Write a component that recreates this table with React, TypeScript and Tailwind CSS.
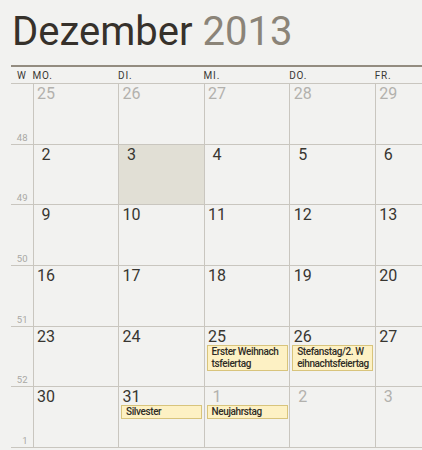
const weekdays = ['MO.', 'DI.', 'MI.', 'DO.', 'FR.'];

interface Day {
  n: number;
  other?: boolean;
  today?: boolean;
  events?: string[][];
}

interface Week {
  kw: number;
  days: Day[];
}

// nur Mo-Fr, Sa/So liegen ausserhalb des Bildes
const weeks: Week[] = [
  { kw: 48, days: [25, 26, 27, 28, 29].map((n) => ({ n, other: true })) },
  { kw: 49, days: [2, 3, 4, 5, 6].map((n) => ({ n, today: n === 3 })) },
  { kw: 50, days: [9, 10, 11, 12, 13].map((n) => ({ n })) },
  { kw: 51, days: [16, 17, 18, 19, 20].map((n) => ({ n })) },
  {
    kw: 52,
    days: [
      { n: 23 },
      { n: 24 },
      { n: 25, events: [['Erster Weihnach', 'tsfeiertag']] },
      { n: 26, events: [['Stefanstag/2. W', 'eihnachtsfeiertag']] },
      { n: 27 },
    ],
  },
  {
    kw: 1,
    days: [
      { n: 30 },
      { n: 31, events: [['Silvester']] },
      { n: 1, other: true, events: [['Neujahrstag']] },
      { n: 2, other: true },
      { n: 3, other: true },
    ],
  },
];

function DayCell({ day }: { day: Day }) {
  return (
    <div
      className={`w-[85.55px] shrink-0 border-l border-[#c9c6bf] ${day.today ? 'bg-[#e1dfd5]' : ''}`}
    >
      <div
        className={`w-[25px] pt-[2px] text-center text-[16px] leading-[16px] ${
          day.other ? 'text-[#b2b1ad]' : 'text-[#383631]'
        }`}
      >
        {day.n}
      </div>
      {/* Termine */}
      {day.events?.map((lines, i) => (
        <div
          key={i}
          className="ml-[2px] mr-[1.5px] border border-[#d8c47c] bg-[#fdf1c4] pl-[4px] text-[10px] font-medium leading-[12px] tracking-[-0.4px] text-[#2f2c26] whitespace-nowrap overflow-hidden"
        >
          {lines.map((l, j) => (
            <div key={j}>{l}</div>
          ))}
        </div>
      ))}
    </div>
  );
}

export default function App() {
  return (
    <div className="w-[422px] h-[450px] overflow-hidden bg-[#f2f2f0] font-['Roboto',sans-serif]">
      {/* Monat */}
      <div className="h-[65px] pl-[12px] pt-[8px] text-[40px] font-normal leading-[48px] whitespace-nowrap">
        <span className="text-[#36312b]">Dezember</span>{' '}
        <span className="text-[#8b8478]">2013</span>
      </div>

      <div className="ml-[11px] w-[450px]">
        <div className="h-[2px] bg-[#938c80]" />

        {/* Wochentage */}
        <div className="flex h-[16px] pt-[1px] text-[10px] leading-[15px] tracking-[0.8px] text-[#3a3935]">
          <div className="w-[21.5px] shrink-0 text-center">W</div>
          {weekdays.map((d) => (
            <div key={d} className="w-[85.55px] shrink-0">
              {d}
            </div>
          ))}
        </div>

        {/* Wochen */}
        <div className="border-t border-[#c9c6bf]">
          {weeks.map((w) => (
            <div key={w.kw} className="flex h-[60.7px] border-b border-[#c9c6bf]">
              <div className="flex w-[21.5px] shrink-0 items-end justify-end pr-[5px] pb-[1px] text-[9.5px] leading-[10px] text-[#a9a8a4]">
                {w.kw}
              </div>
              {w.days.map((d, i) => (
                <DayCell key={i} day={d} />
              ))}
            </div>
          ))}
        </div>
      </div>
    </div>
  );
}
